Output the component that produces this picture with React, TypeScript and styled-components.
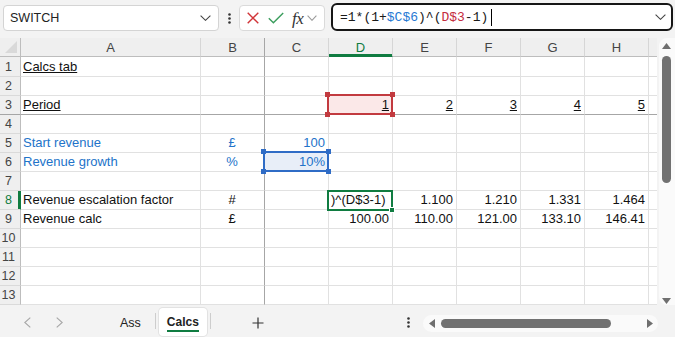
import React from 'react';
import styled, { createGlobalStyle, css } from 'styled-components';

const FONT = `"Liberation Sans", Arial, sans-serif`;
const MONO = `"Liberation Mono", "DejaVu Sans Mono", monospace`;
const CHROME = '#f3f3f3';
const HEAD = '#efefef';
const GRID = '#e1e1e1';
const FREEZE = '#a6a6a6';
const GREEN = '#107c41';
const BLUE_TEXT = '#2273c9';
const RED_RANGE = '#c23a3f';
const BLUE_RANGE = '#2f6cc6';

const GlobalStyle = createGlobalStyle`
  html, body { margin: 0; padding: 0; }
  body { background: ${CHROME}; font-family: ${FONT}; overflow: hidden; }
  *, *::before, *::after { box-sizing: border-box; }
`;

const Frame = styled.div`
  width: 675px;
  height: 337px;
  display: flex;
  flex-direction: column;
  background: ${CHROME};
  overflow: hidden;
`;

/* ---------- toolbar ---------- */
const Toolbar = styled.div`
  height: 38px;
  flex: none;
  display: flex;
  align-items: flex-start;
  padding-left: 3px;
`;

const NameBox = styled.div`
  margin-top: 5px;
  width: 216px;
  height: 26px;
  background: #fff;
  border: 1px solid #d4d4d4;
  border-radius: 4px;
  display: flex;
  align-items: center;
  justify-content: space-between;
  padding: 0 7px 0 6px;
  font-size: 12.5px;
  color: #222;
`;

const MoreButton = styled.div`
  margin-top: 5px;
  width: 20px;
  height: 26px;
  display: flex;
  align-items: center;
  justify-content: center;
`;

const ButtonGroup = styled.div`
  margin-top: 5px;
  width: 86px;
  height: 26px;
  background: #fff;
  border: 1px solid #dadada;
  border-radius: 4px;
  display: flex;
  align-items: center;
`;

const IconSlot = styled.span<{ $ml: number }>`
  display: flex;
  align-items: center;
  margin-left: ${p => p.$ml}px;
`;

const Fx = styled.span`
  margin-left: 8px;
  font-family: "Liberation Serif", "DejaVu Serif", serif;
  font-style: italic;
  font-size: 17px;
  line-height: 1;
  color: #333;
  letter-spacing: -0.5px;
`;

const FormulaBox = styled.div`
  margin-top: 3px;
  margin-left: 6px;
  width: 342px;
  height: 28px;
  background: #fff;
  border: 2px solid #161616;
  border-radius: 6px;
  display: flex;
  align-items: center;
  justify-content: space-between;
  padding: 0 5px 0 7px;
`;

const FormulaText = styled.div`
  display: flex;
  align-items: center;
  font-family: ${MONO};
  font-size: 13px;
  color: #1a1a1a;
  white-space: pre;
`;

const Ref = styled.span<{ $c: string }>`
  color: ${p => p.$c};
`;

const Caret = styled.span`
  display: inline-block;
  width: 1px;
  height: 17px;
  background: #000;
  margin-left: 3px;
`;

/* ---------- sheet ---------- */
const Main = styled.div`
  flex: 1;
  display: flex;
  min-height: 0;
`;

const Sheet = styled.div`
  width: 657px;
  flex: none;
  display: grid;
  grid-template-columns: 21px 180px 64px 64px 64px 64px 64px 64px 64px 8px;
  grid-template-rows: 19px 20px repeat(12, 19px);
  background: #fff;
  font-size: 13px;
`;

const Corner = styled.div`
  position: relative;
  background: ${HEAD};
  border-right: 1px solid #bdbdbd;
  border-bottom: 1px solid #bdbdbd;
`;

const CornerTriangle = styled.div`
  position: absolute;
  right: 3px;
  bottom: 3px;
  width: 12px;
  height: 12px;
  background: #d9d9d9;
  clip-path: polygon(100% 0, 100% 100%, 0 100%);
`;

const ColHead = styled.div<{ $active?: boolean; $freeze?: boolean; $partial?: boolean }>`
  background: ${HEAD};
  border-right: ${p => (p.$partial ? 'none' : `1px solid ${p.$freeze ? FREEZE : '#d6d6d6'}`)};
  border-bottom: 1px solid #bdbdbd;
  display: flex;
  align-items: center;
  justify-content: center;
  color: #444;
  font-size: 13px;
  ${p =>
    p.$active &&
    css`
      color: ${GREEN};
      box-shadow: inset 0 -2px 0 ${GREEN};
      border-bottom-color: ${GREEN};
    `}
`;

const RowHead = styled.div<{ $active?: boolean; $freeze?: boolean }>`
  background: ${HEAD};
  border-right: 1px solid #bdbdbd;
  border-bottom: 1px solid ${p => (p.$freeze ? FREEZE : '#dadada')};
  display: flex;
  align-items: flex-end;
  justify-content: center;
  padding-right: 3px;
  line-height: 18px;
  color: #444;
  font-size: 12.5px;
  ${p =>
    p.$active &&
    css`
      color: ${GREEN};
      box-shadow: inset -2px 0 0 ${GREEN};
      border-right-color: ${GREEN};
    `}
`;

type Align = 'left' | 'center' | 'right';

const Cell = styled.div<{
  $align: Align;
  $blue?: boolean;
  $freezeR?: boolean;
  $freezeB?: boolean;
  $fill?: string;
  $partial?: boolean;
}>`
  position: relative;
  display: flex;
  align-items: flex-end;
  justify-content: ${p => (p.$align === 'right' ? 'flex-end' : p.$align === 'center' ? 'center' : 'flex-start')};
  padding: 0 3px 0 2px;
  border-right: ${p => (p.$partial ? 'none' : `1px solid ${p.$freezeR ? FREEZE : GRID}`)};
  border-bottom: 1px solid ${p => (p.$freezeB ? FREEZE : GRID)};
  background: ${p => p.$fill ?? '#fff'};
  color: ${p => (p.$blue ? BLUE_TEXT : '#111')};
  line-height: 18px;
  white-space: nowrap;
`;

const CellText = styled.span<{ $u?: boolean }>`
  text-decoration: ${p => (p.$u ? 'underline' : 'none')};
  text-underline-offset: 1px;
`;

const RangeBox = styled.div<{ $color: string }>`
  position: absolute;
  top: -2px;
  left: -2px;
  right: -1px;
  bottom: -1px;
  border: 2px solid ${p => p.$color};
  z-index: 3;
  pointer-events: none;
`;

const Handle = styled.span<{ $color: string; $v: 'top' | 'bottom'; $h: 'left' | 'right' }>`
  position: absolute;
  width: 5px;
  height: 5px;
  background: ${p => p.$color};
  ${p => p.$v}: -4px;
  ${p => p.$h}: -4px;
`;

const ActiveBox = styled.div`
  position: absolute;
  top: -1px;
  left: -2px;
  right: -1px;
  bottom: -2px;
  border: 2px solid ${GREEN};
  z-index: 4;
  pointer-events: none;
`;

const FillHandle = styled.span`
  position: absolute;
  right: -4px;
  bottom: -4px;
  width: 6px;
  height: 6px;
  background: ${GREEN};
  border: 1px solid #fff;
`;

/* ---------- vertical scrollbar ---------- */
const VScroll = styled.div`
  width: 18px;
  flex: none;
  display: flex;
  padding-left: 2px;
  background: ${CHROME};
`;

const VTrack = styled.div`
  flex: 1;
  display: flex;
  flex-direction: column;
  align-items: center;
  background: #fafafa;
  border-radius: 8px 0 0 8px;
  padding-right: 1px;
`;

const VThumb = styled.div`
  margin-top: 7px;
  width: 9px;
  height: 127px;
  border-radius: 5px;
  background: #717171;
`;

const ArrowSlot = styled.div<{ $mt?: string; $mb?: number }>`
  display: flex;
  margin-top: ${p => p.$mt ?? '0'};
  margin-bottom: ${p => p.$mb ?? 0}px;
`;

/* ---------- bottom bar ---------- */
const BottomBar = styled.div`
  height: 32px;
  flex: none;
  display: flex;
  align-items: stretch;
  background: ${CHROME};
`;

const NavGroup = styled.div`
  width: 106px;
  display: flex;
  padding-left: 11px;
`;

const NavButton = styled.div`
  width: 32px;
  display: flex;
  align-items: center;
  justify-content: center;
  padding-top: 3px;
`;

const Tab = styled.div<{ $active?: boolean }>`
  display: flex;
  align-items: center;
  justify-content: center;
  padding: 3px 14px 0;
  font-size: 12.5px;
  color: #222;
  ${p =>
    p.$active &&
    css`
      margin: 3px 0 1px 3px;
      padding: 0 8px;
      background: #fff;
      border-radius: 4px;
      box-shadow: 0 0 0 1px #e2e2e2;
      font-weight: 700;
      font-size: 12px;
    `}
`;

const ActiveLabel = styled.span`
  padding-top: 3px;
  border-bottom: 2px solid ${GREEN};
  padding-bottom: 1px;
  line-height: 14px;
`;

const TabSep = styled.div<{ $ml?: number }>`
  width: 1px;
  margin: 8px 0 8px ${p => p.$ml ?? 0}px;
  background: #cdcdcd;
`;

const AddButton = styled.div`
  width: 32px;
  margin-left: 31px;
  display: flex;
  align-items: center;
  justify-content: center;
  padding-top: 3px;
`;

const DotsButton = styled.div`
  margin-left: auto;
  margin-right: 8px;
  width: 14px;
  display: flex;
  align-items: center;
  justify-content: center;
  padding-top: 3px;
`;

const HScroll = styled.div`
  width: 235px;
  height: 17px;
  margin-top: 10px;
  margin-right: 17px;
  background: #fafafa;
  border-radius: 9px;
  display: flex;
  align-items: center;
  padding: 0 5px 0 6px;
`;

const HThumb = styled.div`
  margin-left: 6px;
  width: 170px;
  height: 9px;
  border-radius: 5px;
  background: #717171;
`;

const PushRight = styled.div`
  margin-left: auto;
  display: flex;
`;

/* ---------- icons ---------- */
const Chevron = ({ color = '#444', w = 11 }: { color?: string; w?: number }) => (
  <svg width={w} height={6} viewBox={`0 0 ${w} 6`}>
    <polyline points={`0.6,0.6 ${w / 2},5.3 ${w - 0.6},0.6`} fill="none" stroke={color} strokeWidth={1.1} />
  </svg>
);

const VDots = ({ h = 12 }: { h?: number }) => (
  <svg width={3} height={h} viewBox={`0 0 3 ${h}`}>
    <circle cx={1.5} cy={1.5} r={1.3} fill="#333" />
    <circle cx={1.5} cy={h / 2} r={1.3} fill="#333" />
    <circle cx={1.5} cy={h - 1.5} r={1.3} fill="#333" />
  </svg>
);

const CrossIcon = () => (
  <svg width={12} height={12} viewBox="0 0 12 12">
    <path d="M0.7 0.7 L11.3 11.3 M11.3 0.7 L0.7 11.3" stroke="#d13438" strokeWidth={1.4} fill="none" />
  </svg>
);

const CheckIcon = () => (
  <svg width={16} height={12} viewBox="0 0 16 12">
    <polyline points="0.8,6.2 5.4,10.8 15.2,1" fill="none" stroke="#3a9d5d" strokeWidth={1.4} />
  </svg>
);

const SideChevron = ({ dir }: { dir: 'left' | 'right' }) => (
  <svg width={7} height={11} viewBox="0 0 7 11">
    <polyline
      points={dir === 'left' ? '6.3,0.6 0.8,5.5 6.3,10.4' : '0.7,0.6 6.2,5.5 0.7,10.4'}
      fill="none"
      stroke="#a6a6a6"
      strokeWidth={1.1}
    />
  </svg>
);

const PlusIcon = () => (
  <svg width={12} height={12} viewBox="0 0 12 12">
    <path d="M6 0.5 V11.5 M0.5 6 H11.5" stroke="#333" strokeWidth={1.2} fill="none" />
  </svg>
);

const Tri = ({ dir }: { dir: 'up' | 'down' | 'left' | 'right' }) => {
  const pts = {
    up: '0,6 4.5,0 9,6',
    down: '0,0 9,0 4.5,6',
    left: '6,0 6,9 0,4.5',
    right: '0,0 0,9 6,4.5',
  }[dir];
  const vertical = dir === 'up' || dir === 'down';
  return (
    <svg width={vertical ? 9 : 6} height={vertical ? 6 : 9} viewBox={vertical ? '0 0 9 6' : '0 0 6 9'}>
      <polygon points={pts} fill="#6f6f6f" />
    </svg>
  );
};

/* ---------- data ---------- */
const COLS = ['A', 'B', 'C', 'D', 'E', 'F', 'G', 'H', 'I'] as const;
type Col = (typeof COLS)[number];

type Spec = {
  t: string;
  align?: Align;
  blue?: boolean;
  u?: boolean;
  range?: 'red' | 'blue';
  active?: boolean;
};

const DATA: Record<number, Partial<Record<Col, Spec>>> = {
  1: { A: { t: 'Calcs tab', u: true } },
  3: {
    A: { t: 'Period', u: true },
    D: { t: '1', align: 'right', u: true, range: 'red' },
    E: { t: '2', align: 'right', u: true },
    F: { t: '3', align: 'right', u: true },
    G: { t: '4', align: 'right', u: true },
    H: { t: '5', align: 'right', u: true },
  },
  5: {
    A: { t: 'Start revenue', blue: true },
    B: { t: '£', align: 'center', blue: true },
    C: { t: '100', align: 'right', blue: true },
  },
  6: {
    A: { t: 'Revenue growth', blue: true },
    B: { t: '%', align: 'center', blue: true },
    C: { t: '10%', align: 'right', blue: true, range: 'blue' },
  },
  8: {
    A: { t: 'Revenue escalation factor' },
    B: { t: '#', align: 'center' },
    D: { t: ')^(D$3-1)', active: true },
    E: { t: '1.100', align: 'right' },
    F: { t: '1.210', align: 'right' },
    G: { t: '1.331', align: 'right' },
    H: { t: '1.464', align: 'right' },
  },
  9: {
    A: { t: 'Revenue calc' },
    B: { t: '£', align: 'center' },
    D: { t: '100.00', align: 'right' },
    E: { t: '110.00', align: 'right' },
    F: { t: '121.00', align: 'right' },
    G: { t: '133.10', align: 'right' },
    H: { t: '146.41', align: 'right' },
  },
};

const ROWS = Array.from({ length: 13 }, (_, i) => i + 1);

const RANGE = {
  red: { color: RED_RANGE, fill: '#fbe8e8' },
  blue: { color: BLUE_RANGE, fill: '#e8eef8' },
};

const Range = ({ color }: { color: string }) => (
  <RangeBox $color={color}>
    <Handle $color={color} $v="top" $h="left" />
    <Handle $color={color} $v="top" $h="right" />
    <Handle $color={color} $v="bottom" $h="left" />
    <Handle $color={color} $v="bottom" $h="right" />
  </RangeBox>
);

export default function App() {
  return (
    <>
      <GlobalStyle />
      <Frame>
        <Toolbar>
          <NameBox>
            <span>SWITCH</span>
            <Chevron />
          </NameBox>
          <MoreButton>
            <VDots h={11} />
          </MoreButton>
          <ButtonGroup>
            <IconSlot $ml={7}>
              <CrossIcon />
            </IconSlot>
            <IconSlot $ml={9}>
              <CheckIcon />
            </IconSlot>
            <Fx>fx</Fx>
            <IconSlot $ml={4}>
              <Chevron color="#9a9a9a" w={10} />
            </IconSlot>
          </ButtonGroup>
          <FormulaBox>
            <FormulaText>
              {'=1*(1+'}
              <Ref $c="#2579d3">$C$6</Ref>
              {')^('}
              <Ref $c="#c42b3c">D$3</Ref>
              {'-1)'}
              <Caret />
            </FormulaText>
            <Chevron />
          </FormulaBox>
        </Toolbar>

        <Main>
          <Sheet>
            <Corner>
              <CornerTriangle />
            </Corner>
            {COLS.map(c => (
              <ColHead key={c} $active={c === 'D'} $freeze={c === 'B'} $partial={c === 'I'}>
                {c === 'I' ? '' : c}
              </ColHead>
            ))}
            {ROWS.map(r => (
              <React.Fragment key={r}>
                <RowHead $active={r === 8} $freeze={r === 3}>
                  {r}
                </RowHead>
                {COLS.map(c => {
                  const s = DATA[r]?.[c];
                  const range = s?.range ? RANGE[s.range] : undefined;
                  return (
                    <Cell
                      key={c}
                      $align={s?.align ?? 'left'}
                      $blue={s?.blue}
                      $freezeR={c === 'B'}
                      $freezeB={r === 3}
                      $fill={range?.fill}
                      $partial={c === 'I'}
                    >
                      {s && <CellText $u={s.u}>{s.t}</CellText>}
                      {range && <Range color={range.color} />}
                      {s?.active && (
                        <ActiveBox>
                          <FillHandle />
                        </ActiveBox>
                      )}
                    </Cell>
                  );
                })}
              </React.Fragment>
            ))}
          </Sheet>
          <VScroll>
            <VTrack>
              <ArrowSlot $mt="5px">
                <Tri dir="up" />
              </ArrowSlot>
              <VThumb />
              <ArrowSlot $mt="auto" $mb={1}>
                <Tri dir="down" />
              </ArrowSlot>
            </VTrack>
          </VScroll>
        </Main>

        <BottomBar>
          <NavGroup>
            <NavButton>
              <SideChevron dir="left" />
            </NavButton>
            <NavButton>
              <SideChevron dir="right" />
            </NavButton>
          </NavGroup>
          <Tab>Ass</Tab>
          <TabSep />
          <Tab $active>
            <ActiveLabel>Calcs</ActiveLabel>
          </Tab>
          <TabSep $ml={3} />
          <AddButton>
            <PlusIcon />
          </AddButton>
          <DotsButton>
            <VDots h={11} />
          </DotsButton>
          <HScroll>
            <Tri dir="left" />
            <HThumb />
            <PushRight>
              <Tri dir="right" />
            </PushRight>
          </HScroll>
        </BottomBar>
      </Frame>
    </>
  );
}
